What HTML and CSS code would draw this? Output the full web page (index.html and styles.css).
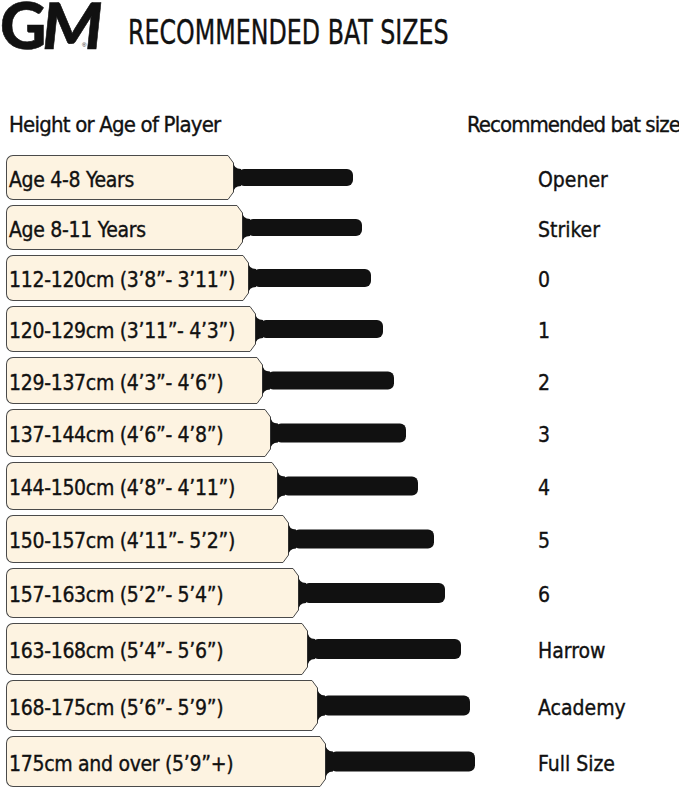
FILE: index.html
```html
<!DOCTYPE html>
<html lang="en">
<head>
<meta charset="utf-8">
<title>Recommended Bat Sizes</title>
<link rel="stylesheet" href="styles.css">
</head>
<body>
<div class="page">
  <header class="top">
    <div class="logo"><span class="gm">G<span class="gm-m">M</span></span><span class="reg">®</span></div>
    <h1 class="title">RECOMMENDED BAT SIZES</h1>
  </header>
  <div class="heads">
    <span class="head-left">Height or Age of Player</span>
    <span class="head-right">Recommended bat size</span>
  </div>
  <div class="rows">
    <div class="row">
      <div class="bat">
        <div class="blade" style="width:222px;height:45px">Age 4-8 Years</div>
        <svg class="shoulder" width="125" height="45" viewBox="0 0 125 45">
          <polygon class="cham" points="0,0.5 5.5,8 5.5,37 0,44.5"/>
          <polyline class="cham-line" points="0,0.5 5.5,8 5.5,37 0,44.5"/>
          <rect class="handle" x="10" y="14" width="115" height="17" rx="6"/>
          <path class="handle" d="M5.5,7 Q5.5,14 13,14 L13,31 Q5.5,31 5.5,38 Z"/>
        </svg>
      </div>
      <div class="size">Opener</div>
    </div>
    <div class="row">
      <div class="bat">
        <div class="blade" style="width:231px;height:45px">Age 8-11 Years</div>
        <svg class="shoulder" width="125" height="45" viewBox="0 0 125 45">
          <polygon class="cham" points="0,0.5 5.5,8 5.5,37 0,44.5"/>
          <polyline class="cham-line" points="0,0.5 5.5,8 5.5,37 0,44.5"/>
          <rect class="handle" x="10" y="14" width="115" height="17" rx="6"/>
          <path class="handle" d="M5.5,7 Q5.5,14 13,14 L13,31 Q5.5,31 5.5,38 Z"/>
        </svg>
      </div>
      <div class="size">Striker</div>
    </div>
    <div class="row">
      <div class="bat">
        <div class="blade" style="width:237px;height:46px">112-120cm (3’8”- 3’11”)</div>
        <svg class="shoulder" width="128" height="46" viewBox="0 0 128 46">
          <polygon class="cham" points="0,0.5 5.5,8 5.5,38 0,45.5"/>
          <polyline class="cham-line" points="0,0.5 5.5,8 5.5,38 0,45.5"/>
          <rect class="handle" x="10" y="14" width="118" height="18" rx="6"/>
          <path class="handle" d="M5.5,7 Q5.5,14 13,14 L13,32 Q5.5,32 5.5,39 Z"/>
        </svg>
      </div>
      <div class="size">0</div>
    </div>
    <div class="row">
      <div class="bat">
        <div class="blade" style="width:244px;height:46px">120-129cm (3’11”- 4’3”)</div>
        <svg class="shoulder" width="133" height="46" viewBox="0 0 133 46">
          <polygon class="cham" points="0,0.5 5.5,8 5.5,38 0,45.5"/>
          <polyline class="cham-line" points="0,0.5 5.5,8 5.5,38 0,45.5"/>
          <rect class="handle" x="10" y="14" width="123" height="18" rx="6"/>
          <path class="handle" d="M5.5,7 Q5.5,14 13,14 L13,32 Q5.5,32 5.5,39 Z"/>
        </svg>
      </div>
      <div class="size">1</div>
    </div>
    <div class="row">
      <div class="bat">
        <div class="blade" style="width:251px;height:47px">129-137cm (4’3”- 4’6”)</div>
        <svg class="shoulder" width="137" height="47" viewBox="0 0 137 47">
          <polygon class="cham" points="0,0.5 5.5,8 5.5,39 0,46.5"/>
          <polyline class="cham-line" points="0,0.5 5.5,8 5.5,39 0,46.5"/>
          <rect class="handle" x="10" y="14.5" width="127" height="18" rx="6"/>
          <path class="handle" d="M5.5,7 Q5.5,14.5 13,14.5 L13,32.5 Q5.5,32.5 5.5,40 Z"/>
        </svg>
      </div>
      <div class="size">2</div>
    </div>
    <div class="row">
      <div class="bat">
        <div class="blade" style="width:259px;height:48px">137-144cm (4’6”- 4’8”)</div>
        <svg class="shoulder" width="141" height="48" viewBox="0 0 141 48">
          <polygon class="cham" points="0,0.5 5.5,8 5.5,40 0,47.5"/>
          <polyline class="cham-line" points="0,0.5 5.5,8 5.5,40 0,47.5"/>
          <rect class="handle" x="10" y="14.5" width="131" height="19" rx="6"/>
          <path class="handle" d="M5.5,7 Q5.5,14.5 13,14.5 L13,33.5 Q5.5,33.5 5.5,41 Z"/>
        </svg>
      </div>
      <div class="size">3</div>
    </div>
    <div class="row">
      <div class="bat">
        <div class="blade" style="width:266px;height:48px">144-150cm (4’8”- 4’11”)</div>
        <svg class="shoulder" width="146" height="48" viewBox="0 0 146 48">
          <polygon class="cham" points="0,0.5 5.5,8 5.5,40 0,47.5"/>
          <polyline class="cham-line" points="0,0.5 5.5,8 5.5,40 0,47.5"/>
          <rect class="handle" x="10" y="14.5" width="136" height="19" rx="6"/>
          <path class="handle" d="M5.5,7 Q5.5,14.5 13,14.5 L13,33.5 Q5.5,33.5 5.5,41 Z"/>
        </svg>
      </div>
      <div class="size">4</div>
    </div>
    <div class="row">
      <div class="bat">
        <div class="blade" style="width:277px;height:48px">150-157cm (4’11”- 5’2”)</div>
        <svg class="shoulder" width="151" height="48" viewBox="0 0 151 48">
          <polygon class="cham" points="0,0.5 5.5,8 5.5,40 0,47.5"/>
          <polyline class="cham-line" points="0,0.5 5.5,8 5.5,40 0,47.5"/>
          <rect class="handle" x="10" y="14.5" width="141" height="19" rx="6"/>
          <path class="handle" d="M5.5,7 Q5.5,14.5 13,14.5 L13,33.5 Q5.5,33.5 5.5,41 Z"/>
        </svg>
      </div>
      <div class="size">5</div>
    </div>
    <div class="row">
      <div class="bat">
        <div class="blade" style="width:287px;height:50px">157-163cm (5’2”- 5’4”)</div>
        <svg class="shoulder" width="152" height="50" viewBox="0 0 152 50">
          <polygon class="cham" points="0,0.5 5.5,8 5.5,42 0,49.5"/>
          <polyline class="cham-line" points="0,0.5 5.5,8 5.5,42 0,49.5"/>
          <rect class="handle" x="10" y="15" width="142" height="20" rx="6"/>
          <path class="handle" d="M5.5,7 Q5.5,15 13,15 L13,35 Q5.5,35 5.5,43 Z"/>
        </svg>
      </div>
      <div class="size">6</div>
    </div>
    <div class="row">
      <div class="bat">
        <div class="blade" style="width:296px;height:52px">163-168cm (5’4”- 5’6”)</div>
        <svg class="shoulder" width="159" height="52" viewBox="0 0 159 52">
          <polygon class="cham" points="0,0.5 5.5,8 5.5,44 0,51.5"/>
          <polyline class="cham-line" points="0,0.5 5.5,8 5.5,44 0,51.5"/>
          <rect class="handle" x="10" y="16" width="149" height="20" rx="6"/>
          <path class="handle" d="M5.5,7 Q5.5,16 13,16 L13,36 Q5.5,36 5.5,45 Z"/>
        </svg>
      </div>
      <div class="size">Harrow</div>
    </div>
    <div class="row">
      <div class="bat">
        <div class="blade" style="width:306px;height:51px">168-175cm (5’6”- 5’9”)</div>
        <svg class="shoulder" width="158" height="51" viewBox="0 0 158 51">
          <polygon class="cham" points="0,0.5 5.5,8 5.5,43 0,50.5"/>
          <polyline class="cham-line" points="0,0.5 5.5,8 5.5,43 0,50.5"/>
          <rect class="handle" x="10" y="15.5" width="148" height="20" rx="6"/>
          <path class="handle" d="M5.5,7 Q5.5,15.5 13,15.5 L13,35.5 Q5.5,35.5 5.5,44 Z"/>
        </svg>
      </div>
      <div class="size">Academy</div>
    </div>
    <div class="row">
      <div class="bat">
        <div class="blade" style="width:314px;height:51px">175cm and over (5’9”+)</div>
        <svg class="shoulder" width="155" height="51" viewBox="0 0 155 51">
          <polygon class="cham" points="0,0.5 5.5,8 5.5,43 0,50.5"/>
          <polyline class="cham-line" points="0,0.5 5.5,8 5.5,43 0,50.5"/>
          <rect class="handle" x="10" y="15.5" width="145" height="20" rx="6"/>
          <path class="handle" d="M5.5,7 Q5.5,15.5 13,15.5 L13,35.5 Q5.5,35.5 5.5,44 Z"/>
        </svg>
      </div>
      <div class="size">Full Size</div>
    </div>
  </div>
</div>
</body>
</html>
```
FILE: styles.css
```css
html, body {
  margin: 0;
  padding: 0;
  background: #ffffff;
}
body {
  font-family: "DejaVu Sans Condensed", "DejaVu Sans", sans-serif;
  color: #111111;
  width: 679px;
  height: 788px;
  overflow: hidden;
  -webkit-text-stroke: 0.35px #111111;
}
.page {
  display: flex;
  flex-direction: column;
}
.top {
  display: flex;
  align-items: flex-start;
  height: 50px;
}
.logo {
  position: relative;
  width: 128px;
  height: 50px;
  flex: none;
  display: flex;
  align-items: center;
}
.gm {
  font-family: "Lato", "Roboto", "Liberation Sans", sans-serif;
  font-weight: 900;
  font-size: 64px;
  line-height: 50px;
  letter-spacing: -6px;
  color: #111;
  -webkit-text-stroke: 0.6px #111;
}
.gm-m {
  display: inline-block;
  transform: skewX(-6deg);
  transform-origin: right bottom;
}
.reg {
  position: absolute;
  left: 82px;
  top: 42px;
  font-size: 6px;
  line-height: 6px;
  font-family: "Liberation Sans", sans-serif;
  -webkit-text-stroke: 0;
}
.title {
  margin: 0;
  font-weight: 400;
  font-size: 33px;
  line-height: 40px;
  padding-top: 13px;
  white-space: nowrap;
  transform: scaleX(0.8);
  transform-origin: left center;
}
.heads {
  display: flex;
  justify-content: space-between;
  margin-top: 60px;
  height: 30px;
  font-size: 22px;
  line-height: 30px;
  letter-spacing: -0.8px;
}
.head-left {
  padding-left: 9px;
}
.head-right {
  width: 212px;
  white-space: nowrap;
  letter-spacing: -0.95px;
}
.rows {
  display: flex;
  flex-direction: column;
  gap: 5px;
  margin-top: 15px;
  padding-left: 6px;
}
.row {
  display: flex;
  align-items: center;
}
.bat {
  width: 532px;
  flex: none;
  display: flex;
  align-items: center;
}
.blade {
  box-sizing: border-box;
  flex: none;
  display: flex;
  align-items: center;
  background: #fdf3e1;
  border: 1px solid #4a4a4a;
  border-right: none;
  border-radius: 7px 0 0 7px;
  padding: 4px 0 0 2px;
  font-size: 21px;
  letter-spacing: -0.3px;
  white-space: nowrap;
}
.shoulder {
  display: block;
  flex: none;
}
.cham {
  fill: #fdf3e1;
}
.cham-line {
  fill: none;
  stroke: #4a4a4a;
  stroke-width: 1;
}
.handle {
  fill: #111111;
}
.size {
  font-size: 21px;
  padding-top: 4px;
}
```
